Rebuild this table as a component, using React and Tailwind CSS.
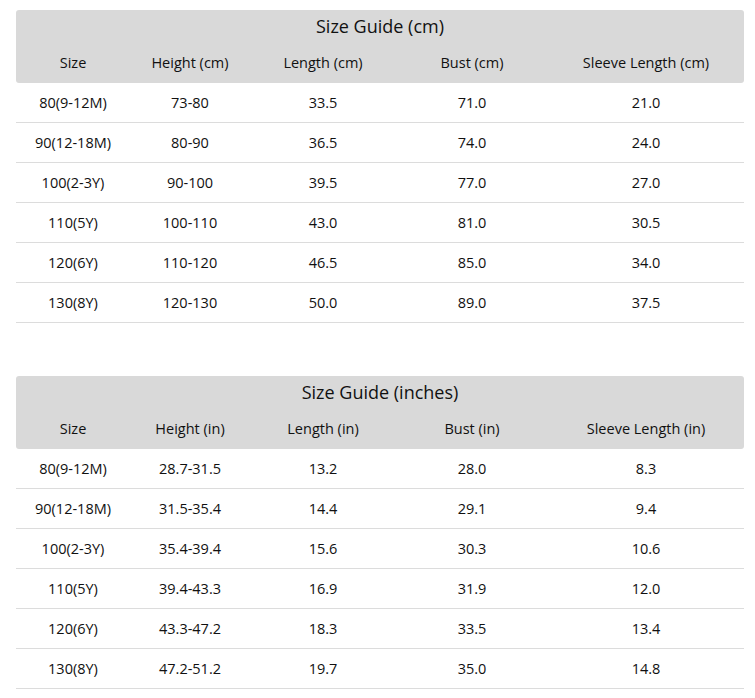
import React from 'react';

const cmRows = [
    ['80(9-12M)', '73-80', '33.5', '71.0', '21.0'],
    ['90(12-18M)', '80-90', '36.5', '74.0', '24.0'],
    ['100(2-3Y)', '90-100', '39.5', '77.0', '27.0'],
    ['110(5Y)', '100-110', '43.0', '81.0', '30.5'],
    ['120(6Y)', '110-120', '46.5', '85.0', '34.0'],
    ['130(8Y)', '120-130', '50.0', '89.0', '37.5'],
];

const inRows = [
    ['80(9-12M)', '28.7-31.5', '13.2', '28.0', '8.3'],
    ['90(12-18M)', '31.5-35.4', '14.4', '29.1', '9.4'],
    ['100(2-3Y)', '35.4-39.4', '15.6', '30.3', '10.6'],
    ['110(5Y)', '39.4-43.3', '16.9', '31.9', '12.0'],
    ['120(6Y)', '43.3-47.2', '18.3', '33.5', '13.4'],
    ['130(8Y)', '47.2-51.2', '19.7', '35.0', '14.8'],
];

const cols = 'grid grid-cols-[114px_120px_146px_152px_196px]';

const SizeTable = ({ title, unit, rows }) => (
    <div className="w-[728px]">
        {/* Header */}
        <div className="bg-[#d9d9d9] rounded-[3px]">
            <div className="h-[32px] flex items-center justify-center text-[18px]">
                {title}
            </div>
            <div className={`${cols} h-[41px] items-center text-center text-[14.5px]`}>
                <div>Size</div>
                <div>Height ({unit})</div>
                <div>Length ({unit})</div>
                <div>Bust ({unit})</div>
                <div>Sleeve Length ({unit})</div>
            </div>
        </div>

        {/* Rows */}
        {rows.map((row, i) => (
            <div
                key={i}
                className={`${cols} h-[40px] items-center text-center text-[14.5px] border-b border-[#dcdcdc]`}
            >
                {row.map((cell, j) => (
                    <div key={j}>{cell}</div>
                ))}
            </div>
        ))}
    </div>
);

const App = () => {
    return (
        <div
            className="min-h-screen bg-white text-[#111] pl-[16px] pt-[10px]"
            style={{ fontFamily: '"Open Sans", "Noto Sans", sans-serif' }}
        >
            <SizeTable title="Size Guide (cm)" unit="cm" rows={cmRows} />
            <div className="mt-[53px]">
                <SizeTable title="Size Guide (inches)" unit="in" rows={inRows} />
            </div>
        </div>
    );
};

export default App;
